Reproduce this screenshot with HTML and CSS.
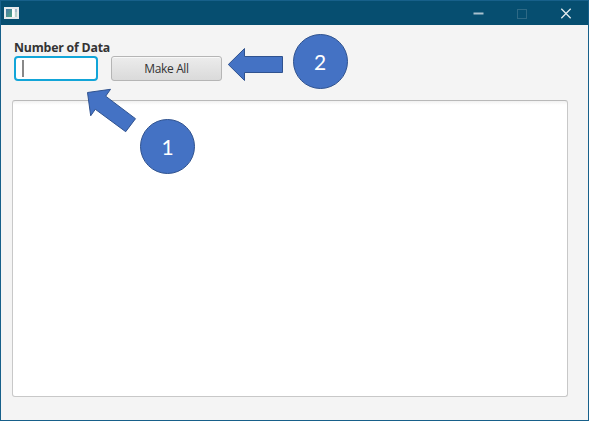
FILE: index.html
```
<!DOCTYPE html>
<html lang="en">
<head>
<meta charset="utf-8">
<title>Number of Data</title>
<link rel="stylesheet" href="styles.css">
</head>
<body>
<div class="window">
  <header class="titlebar">
    <svg class="app-icon" width="15" height="12" viewBox="0 0 15 12">
      <defs><linearGradient id="g" x1="0" y1="0" x2="1" y2="1"><stop offset="0" stop-color="#4779a8"/><stop offset="1" stop-color="#51a582"/></linearGradient></defs>
      <rect width="15" height="12" fill="#e6eaec"/>
      <rect x="2" y="2" width="6" height="8" fill="url(#g)"/>
      <rect x="8" y="2" width="2.5" height="8" fill="#fff"/>
      <rect x="11" y="2" width="2" height="3" fill="#a7bccb"/>
      <rect x="11" y="5" width="2" height="5" fill="#b9d4cd"/>
    </svg>
    <div class="controls">
      <svg width="44" height="24" viewBox="0 0 44 24"><path d="M17.500 12.500h10" stroke="#a9c1ce" stroke-width="2"/></svg>
      <svg width="44" height="24" viewBox="0 0 44 24"><rect x="17.500" y="8.500" width="9" height="9" fill="none" stroke="#2e6985"/></svg>
      <svg width="44" height="24" viewBox="0 0 44 24"><path d="M17.300 7.800l9.400 9.400M26.700 7.800l-9.400 9.400" stroke="#e3ebef" stroke-width="1.300"/></svg>
    </div>
  </header>
  <main class="content">
    <label class="label" for="count">Number of Data</label>
    <div class="row">
      <div class="field" id="count"><span class="caret"></span></div>
      <button class="button">Make All</button>
    </div>
    <div class="output"></div>
  </main>
</div>
<svg class="notes" width="589" height="423" viewBox="0 0 589 423">
  <g fill="#4472c4" stroke="#2f528f">
    <path d="M228.300 64.500L244.500 48.500V56.500H282.500V72.500H244.500V80.500Z"/>
    <path d="M87.500 92.500L110.500 89.300L105.700 96.200L135.500 118.700L125.700 131.700L95.300 109.300L90.700 115.800Z"/>
    <circle cx="320.500" cy="61.500" r="27"/>
    <circle cx="167.500" cy="146.500" r="27"/>
  </g>
  <text x="320" y="70">2</text>
  <text x="167.500" y="155">1</text>
</svg>
</body>
</html>
```
FILE: styles.css
```
body {
  margin: 0;
  background: #fff;
}

.window {
  box-sizing: border-box;
  width: 589px;
  height: 421px;
  border: 1px solid #17608a;
  background: #f4f4f4;
  font-family: "Open Sans", "Noto Sans", sans-serif;
  color: #333;
}

.titlebar {
  display: flex;
  align-items: center;
  justify-content: space-between;
  box-sizing: border-box;
  height: 24px;
  padding: 0 0 0 3px;
  background: #064e70;
}

.app-icon {
  display: block;
}

.controls {
  display: flex;
  margin-top: -1px;
}

.controls svg {
  display: block;
}

.content {
  padding: 14px 20px 0 11px;
}

.label {
  display: block;
  height: 17px;
  margin-left: 2px;
  font-size: 12.300px;
  font-weight: 700;
  letter-spacing: -0.2px;
  line-height: 17px;
}

.row {
  display: flex;
  gap: 13px;
  height: 26px;
  margin-left: 2px;
}

.field {
  box-sizing: border-box;
  width: 84px;
  height: 25px;
  padding: 3px 6px;
  border: 2px solid #12a5d8;
  border-radius: 4px;
  background: #fff;
}

.caret {
  display: block;
  width: 1.500px;
  height: 17px;
  margin-top: -1px;
  background: #888;
}

.button {
  box-sizing: border-box;
  width: 111px;
  height: 25px;
  padding: 1px 0 0;
  border: 1px solid #b5b5b5;
  border-radius: 3px;
  background: linear-gradient(#ececec, #dadada);
  box-shadow: inset 0 1px #f8f8f8;
  font: 12px/22px "Open Sans", "Noto Sans", sans-serif;
  letter-spacing: -0.35px;
  color: #333;
}

.output {
  box-sizing: border-box;
  height: 297px;
  margin-top: 18px;
  border: 1px solid #c8c8c8;
  border-top-color: #b9b9b9;
  border-radius: 3px;
  background: linear-gradient(#f1f1f1, #fff 4px);
}

.notes {
  position: absolute;
  top: 0;
  left: 0;
  pointer-events: none;
}

.notes text {
  font: 21px Lato, "Open Sans", sans-serif;
  fill: #fff;
  text-anchor: middle;
}
```
